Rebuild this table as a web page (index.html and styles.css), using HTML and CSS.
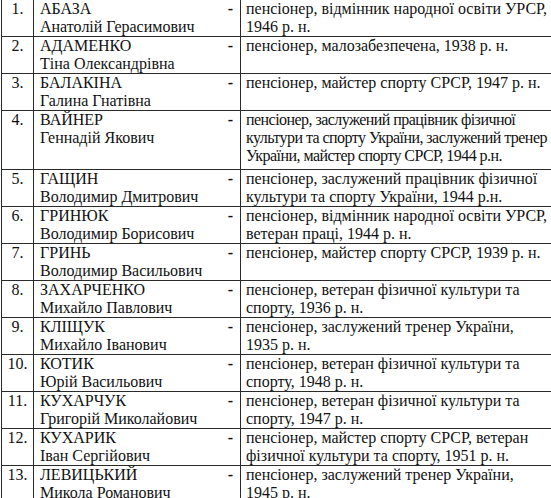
FILE: index.html
```html
<!DOCTYPE html>
<html lang="uk">
<head>
<meta charset="utf-8">
<link rel="stylesheet" href="styles.css">
</head>
<body>
<table class="list">
<colgroup><col class="c-num"><col class="c-name"><col class="c-desc"></colgroup>
<tr class="top"><td class="num">1.</td><td class="name"><div class="first"><span>АБАЗА</span><span class="dash">-</span></div>Анатолій Герасимович</td><td class="desc">пенсіонер, відмінник народної освіти УРСР,<br>1946 р. н.</td></tr>
<tr><td class="num">2.</td><td class="name"><div class="first"><span>АДАМЕНКО</span><span class="dash">-</span></div>Тіна Олександрівна</td><td class="desc">пенсіонер, малозабезпечена, 1938 р. н.</td></tr>
<tr><td class="num">3.</td><td class="name"><div class="first"><span>БАЛАКІНА</span><span class="dash">-</span></div>Галина Гнатівна</td><td class="desc">пенсіонер, майстер спорту СРСР, 1947 р. н.</td></tr>
<tr class="tall"><td class="num">4.</td><td class="name"><div class="first"><span>ВАЙНЕР</span><span class="dash">-</span></div>Геннадій Якович</td><td class="desc narrow">пенсіонер, заслужений працівник фізичної<br>культури та спорту України, заслужений тренер<br>України, майстер спорту СРСР, 1944 р.н.</td></tr>
<tr><td class="num">5.</td><td class="name"><div class="first"><span>ГАЩИН</span><span class="dash">-</span></div>Володимир Дмитрович</td><td class="desc">пенсіонер, заслужений працівник фізичної<br>культури та спорту України, 1944 р.н.</td></tr>
<tr><td class="num">6.</td><td class="name"><div class="first"><span>ГРИНЮК</span><span class="dash">-</span></div>Володимир Борисович</td><td class="desc">пенсіонер, відмінник народної освіти УРСР,<br>ветеран праці, 1944 р. н.</td></tr>
<tr><td class="num">7.</td><td class="name"><div class="first"><span>ГРИНЬ</span><span class="dash">-</span></div>Володимир Васильович</td><td class="desc">пенсіонер, майстер спорту СРСР, 1939 р. н.</td></tr>
<tr><td class="num">8.</td><td class="name"><div class="first"><span>ЗАХАРЧЕНКО</span><span class="dash">-</span></div>Михайло Павлович</td><td class="desc">пенсіонер, ветеран фізичної культури та<br>спорту, 1936 р. н.</td></tr>
<tr><td class="num">9.</td><td class="name"><div class="first"><span>КЛІЩУК</span><span class="dash">-</span></div>Михайло Іванович</td><td class="desc">пенсіонер, заслужений тренер України,<br>1935 р. н.</td></tr>
<tr><td class="num">10.</td><td class="name"><div class="first"><span>КОТИК</span><span class="dash">-</span></div>Юрій Васильович</td><td class="desc">пенсіонер, ветеран фізичної культури та<br>спорту, 1948 р. н.</td></tr>
<tr><td class="num">11.</td><td class="name"><div class="first"><span>КУХАРЧУК</span><span class="dash">-</span></div>Григорій Миколайович</td><td class="desc">пенсіонер, ветеран фізичної культури та<br>спорту, 1947 р. н.</td></tr>
<tr><td class="num">12.</td><td class="name"><div class="first"><span>КУХАРИК</span><span class="dash">-</span></div>Іван Сергійович</td><td class="desc">пенсіонер, майстер спорту СРСР, ветеран<br>фізичної культури та спорту, 1951 р. н.</td></tr>
<tr><td class="num">13.</td><td class="name"><div class="first"><span>ЛЕВИЦЬКИЙ</span><span class="dash">-</span></div>Микола Романович</td><td class="desc">пенсіонер, заслужений тренер України,<br>1945 р. н.</td></tr>
</table>
</body>
</html>
```
FILE: styles.css
```css
html, body {
  margin: 0;
  padding: 0;
  background: #ffffff;
  overflow: hidden;
}
.list {
  margin: 0 0 0 1px;
  width: 550px;
  table-layout: fixed;
  border-collapse: separate;
  border-spacing: 0;
  font-family: "Liberation Serif", "Times New Roman", serif;
  font-size: 16px;
  line-height: 18px;
  color: #111;
}
.c-num { width: 32px; }
.c-name { width: 207px; }
.list td {
  vertical-align: top;
  padding: 0;
  border-left: 1px solid #2a2a2a;
  border-bottom: 1px solid #2a2a2a;
  white-space: nowrap;
  height: 36px;
}
.list tr.top td {
  height: 34px;
}
.list tr.tall td {
  height: 54px;
  padding-bottom: 4px;
}
.num {
  text-align: center;
}
.name {
  padding-left: 6px !important;
  padding-right: 7px !important;
}
.first {
  display: flex;
  justify-content: space-between;
}
.dash {
  font-weight: bold;
}
.desc {
  padding-left: 5px !important;
  overflow: hidden;
}
.narrow {
  letter-spacing: -0.55px;
}
```
